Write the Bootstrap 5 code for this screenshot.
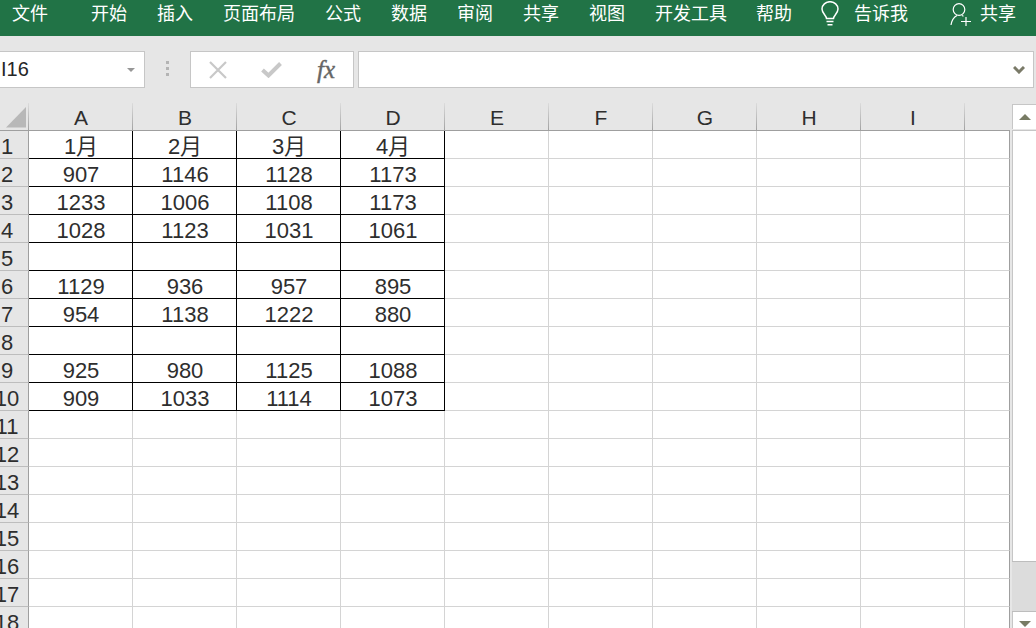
<!DOCTYPE html>
<html lang="zh-CN">
<head>
<meta charset="utf-8">
<title>Excel</title>
<link rel="stylesheet" href="https://cdn.jsdelivr.net/npm/bootstrap@5.3.0/dist/css/bootstrap.min.css">
<style>
html,body{height:100%;overflow:hidden;background:#e6e6e6}
.xl-app{height:628px;width:1036px;font-family:"Liberation Sans","Noto Sans CJK SC",sans-serif;color:#262626}
.xl-ribbon{height:36px;background:#217346;color:#fff;font-size:18px;line-height:25px;padding-left:12px;gap:30px;font-family:"Noto Sans CJK SC",sans-serif;font-weight:400;white-space:nowrap}
.xl-ribbon span{display:block}
.xl-file{margin-right:13px}
.xl-tell{margin-left:-1px}
.xl-bulb{margin:1px -15px 0 -1px}
.xl-tellme{margin-right:12px}
.xl-person{margin:3px -22px 0 0}
.xl-fbar{height:67px;padding-top:15px}
.xl-box{height:37px;background:#fff;border:1px solid #c6c6c6}
.xl-name{width:145px;border-left:0;font-size:20px;line-height:37px;padding-left:1px}
.xl-caret{width:0;height:0;border-left:4px solid transparent;border-right:4px solid transparent;border-top:4px solid #979797;margin:1px 9px 0 0}
.xl-grip{width:45px;height:37px;padding-bottom:2px}
.xl-grip i{display:block;width:3px;height:3px;background:#b4b4b4;margin:1.5px 0}
.xl-fn{width:164px;padding:0 18px 0 18px}
.xl-fx{font-family:"Liberation Serif",serif;font-style:italic;font-weight:400;font-size:25px;line-height:34px;color:#666;-webkit-text-stroke:.4px #666}
.xl-formula{width:676px;margin-left:4px;padding-right:8px}
.xl-sheet{height:525px}
.xl-grid{width:1010px;table-layout:fixed;border-collapse:separate;border-spacing:0;font-size:22px;background:#fff}
.xl-grid th,.xl-grid td{height:28px;padding:5px 0 0;line-height:22px;text-align:center;font-weight:400;border-right:1px solid #d4d4d4;border-bottom:1px solid #d4d4d4;color:#2e2e2e;white-space:nowrap;vertical-align:middle}
.xl-grid thead th{background:#e6e6e6 linear-gradient(#dcdcdc,#a2a2a2) right top/1px 100% no-repeat;border-right:0;border-bottom:1px solid #9f9f9f;padding:2px 0 0;line-height:25px;font-size:21px}
.xl-grid thead th.xl-corner{padding:0;line-height:0;vertical-align:top}
.xl-grid thead th.xl-end{background:#e6e6e6}
.xl-grid tbody th{background:#e6e6e6;border-right:1px solid #9f9f9f;border-bottom:1px solid #bdbdbd}
.xl-rownum{display:flex;justify-content:center;width:14px}
.xl-grid td{padding-left:1px}
.xl-grid td.xl-last{border-right-color:#9f9f9f}
.xl-grid td.xl-ink{border-right-color:#000;border-bottom-color:#000}
.xl-scroll{width:26px;padding-left:2px}
.xl-up{height:25px;margin-top:1px;background:#fff;border:solid #c6c6c6;border-width:1px 0 0 1px}
.xl-tri-up{width:0;height:0;border-left:6px solid transparent;border-right:6px solid transparent;border-bottom:6px solid #787b64}
.xl-tri-down{width:0;height:0;border-left:6px solid transparent;border-right:6px solid transparent;border-top:6px solid #787b64}
.xl-track{height:431px;margin-top:1px;background:#fff;border:solid #c6c6c6;border-width:1px 0 0 1px}
.xl-thumb{height:51px;background:#dcdcdc;border-top:1px solid #bdbdbd;border-bottom:1px solid #bdbdbd}
.xl-down{height:17px;background:#fff;padding-top:9px;border-left:1px solid #c6c6c6}
</style>
</head>
<body>
<div class="xl-app d-flex flex-column overflow-hidden">
  <div class="xl-ribbon d-flex align-items-start">
    <span class="xl-file">文件</span><span>开始</span><span>插入</span><span>页面布局</span><span>公式</span><span>数据</span><span>审阅</span><span>共享</span><span>视图</span><span>开发工具</span><span class="xl-tell">帮助</span>
    <svg class="xl-bulb" width="18" height="25" viewBox="0 0 18 25" fill="none" stroke="#fff" stroke-width="1.5"><path d="M5.5 17.5c0-3-4.5-5-4.500-9.500a8 7.300 0 0 1 16 0c0 4.500-4.500 6.500-4.500 9.500z"/><path d="M5.500 20.500h7M6.500 23.700h5"/></svg>
    <span class="xl-tellme">告诉我</span>
    <svg class="xl-person" width="22" height="23" viewBox="0 0 22 23" fill="none" stroke="#fff" stroke-width="1.200"><circle cx="9" cy="6.500" r="5.800"/><path d="M1 22c.800-5 3-8 6-9.500M12 12.500l1.500.800M16 14v9M11 18.500h10"/></svg>
    <span>共享</span>
  </div>
  <div class="xl-fbar d-flex align-items-start">
    <div class="xl-box xl-name d-flex align-items-center justify-content-between"><span>I16</span><i class="xl-caret"></i></div>
    <div class="xl-grip d-flex flex-column align-items-center justify-content-center"><i></i><i></i><i></i></div>
    <div class="xl-box xl-fn d-flex align-items-center justify-content-between">
      <svg width="18" height="18" viewBox="0 0 18 18" stroke="#c8c8c8" stroke-width="2.200"><path d="M1 1l16 16M17 1L1 17"/></svg>
      <svg width="21" height="16" viewBox="0 0 21 16" fill="none" stroke="#c8c8c8" stroke-width="4"><path d="M1.500 8l6 5.500L19.500 1.500"/></svg>
      <span class="xl-fx">fx</span>
    </div>
    <div class="xl-box xl-formula d-flex align-items-center justify-content-end">
      <svg width="12" height="8" viewBox="0 0 12 8" fill="none" stroke="#7a7a68" stroke-width="3"><path d="M1 1l5 5 5-5"/></svg>
    </div>
  </div>
  <div class="xl-sheet d-flex align-items-start">
    <table class="xl-grid flex-shrink-0">
      <colgroup><col style="width:29px"><col style="width:104px"><col style="width:104px"><col style="width:104px"><col style="width:104px"><col style="width:104px"><col style="width:104px"><col style="width:104px"><col style="width:104px"><col style="width:104px"><col style="width:45px"></colgroup>
      <thead><tr>
        <th class="xl-corner"><svg width="28" height="27" viewBox="0 0 28 27"><path d="M5 24.500L25 4v20.500z" fill="#b8b8b8"/></svg></th>
        <th>A</th><th>B</th><th>C</th><th>D</th><th>E</th><th>F</th><th>G</th><th>H</th><th>I</th><th class="xl-end"></th>
      </tr></thead>
      <tbody>
        <tr><th><span class="xl-rownum">1</span></th><td class="xl-ink">1月</td><td class="xl-ink">2月</td><td class="xl-ink">3月</td><td class="xl-ink">4月</td><td></td><td></td><td></td><td></td><td></td><td class="xl-last"></td></tr>
        <tr><th><span class="xl-rownum">2</span></th><td class="xl-ink">907</td><td class="xl-ink">1146</td><td class="xl-ink">1128</td><td class="xl-ink">1173</td><td></td><td></td><td></td><td></td><td></td><td class="xl-last"></td></tr>
        <tr><th><span class="xl-rownum">3</span></th><td class="xl-ink">1233</td><td class="xl-ink">1006</td><td class="xl-ink">1108</td><td class="xl-ink">1173</td><td></td><td></td><td></td><td></td><td></td><td class="xl-last"></td></tr>
        <tr><th><span class="xl-rownum">4</span></th><td class="xl-ink">1028</td><td class="xl-ink">1123</td><td class="xl-ink">1031</td><td class="xl-ink">1061</td><td></td><td></td><td></td><td></td><td></td><td class="xl-last"></td></tr>
        <tr><th><span class="xl-rownum">5</span></th><td class="xl-ink"></td><td class="xl-ink"></td><td class="xl-ink"></td><td class="xl-ink"></td><td></td><td></td><td></td><td></td><td></td><td class="xl-last"></td></tr>
        <tr><th><span class="xl-rownum">6</span></th><td class="xl-ink">1129</td><td class="xl-ink">936</td><td class="xl-ink">957</td><td class="xl-ink">895</td><td></td><td></td><td></td><td></td><td></td><td class="xl-last"></td></tr>
        <tr><th><span class="xl-rownum">7</span></th><td class="xl-ink">954</td><td class="xl-ink">1138</td><td class="xl-ink">1222</td><td class="xl-ink">880</td><td></td><td></td><td></td><td></td><td></td><td class="xl-last"></td></tr>
        <tr><th><span class="xl-rownum">8</span></th><td class="xl-ink"></td><td class="xl-ink"></td><td class="xl-ink"></td><td class="xl-ink"></td><td></td><td></td><td></td><td></td><td></td><td class="xl-last"></td></tr>
        <tr><th><span class="xl-rownum">9</span></th><td class="xl-ink">925</td><td class="xl-ink">980</td><td class="xl-ink">1125</td><td class="xl-ink">1088</td><td></td><td></td><td></td><td></td><td></td><td class="xl-last"></td></tr>
        <tr><th><span class="xl-rownum">10</span></th><td class="xl-ink">909</td><td class="xl-ink">1033</td><td class="xl-ink">1114</td><td class="xl-ink">1073</td><td></td><td></td><td></td><td></td><td></td><td class="xl-last"></td></tr>
        <tr><th><span class="xl-rownum">11</span></th><td></td><td></td><td></td><td></td><td></td><td></td><td></td><td></td><td></td><td class="xl-last"></td></tr>
        <tr><th><span class="xl-rownum">12</span></th><td></td><td></td><td></td><td></td><td></td><td></td><td></td><td></td><td></td><td class="xl-last"></td></tr>
        <tr><th><span class="xl-rownum">13</span></th><td></td><td></td><td></td><td></td><td></td><td></td><td></td><td></td><td></td><td class="xl-last"></td></tr>
        <tr><th><span class="xl-rownum">14</span></th><td></td><td></td><td></td><td></td><td></td><td></td><td></td><td></td><td></td><td class="xl-last"></td></tr>
        <tr><th><span class="xl-rownum">15</span></th><td></td><td></td><td></td><td></td><td></td><td></td><td></td><td></td><td></td><td class="xl-last"></td></tr>
        <tr><th><span class="xl-rownum">16</span></th><td></td><td></td><td></td><td></td><td></td><td></td><td></td><td></td><td></td><td class="xl-last"></td></tr>
        <tr><th><span class="xl-rownum">17</span></th><td></td><td></td><td></td><td></td><td></td><td></td><td></td><td></td><td></td><td class="xl-last"></td></tr>
        <tr><th><span class="xl-rownum">18</span></th><td></td><td></td><td></td><td></td><td></td><td></td><td></td><td></td><td></td><td class="xl-last"></td></tr>
      </tbody>
    </table>
    <div class="xl-scroll d-flex flex-column flex-shrink-0">
      <div class="xl-up d-flex align-items-center justify-content-center"><i class="xl-tri-up"></i></div>
      <div class="xl-track flex-shrink-0"></div>
      <div class="xl-thumb flex-shrink-0"></div>
      <div class="xl-down d-flex justify-content-center align-items-start"><i class="xl-tri-down"></i></div>
    </div>
  </div>
</div>
<script src="https://cdn.jsdelivr.net/npm/bootstrap@5.3.0/dist/js/bootstrap.bundle.min.js"></script>
</body>
</html>
